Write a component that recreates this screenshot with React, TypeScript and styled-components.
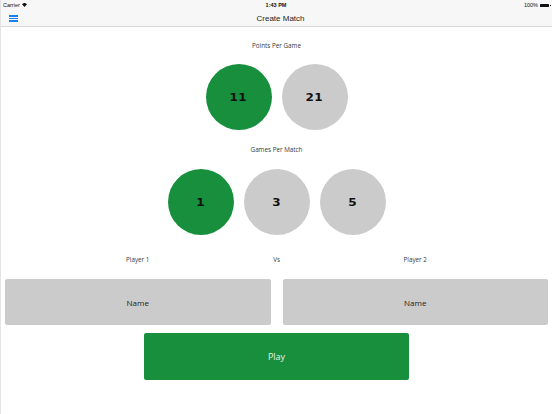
import { useState } from 'react';
import styled, { createGlobalStyle } from 'styled-components';

const GREEN = '#178f3d';
const GREY = '#cbcbcb';

const GlobalStyle = createGlobalStyle`
  html, body {
    margin: 0;
    padding: 0;
    background: #ffffff;
  }
  body {
    font-family: 'Open Sans', 'Liberation Sans', sans-serif;
  }
`;

const Page = styled.div`
  width: 552px;
  height: 414px;
  display: flex;
  flex-direction: column;
  border-left: 1px solid #e4e4e4;
  box-sizing: border-box;
  overflow: hidden;
`;

const Header = styled.header`
  background: #f7f7f7;
  border-bottom: 1px solid #d9d9d9;
  height: 27px;
  box-sizing: border-box;
  display: flex;
  flex-direction: column;
`;

const StatusBar = styled.div`
  height: 10px;
  padding: 0 3px 0 2px;
  display: grid;
  grid-template-columns: 1fr auto 1fr;
  align-items: center;
  font-family: 'Liberation Sans', Arial, sans-serif;
  font-size: 5.5px;
  color: #111;
`;

const Carrier = styled.span`
  display: flex;
  align-items: center;
  gap: 2px;
`;

const Clock = styled.span`
  font-weight: 700;
`;

const Battery = styled.span`
  justify-self: end;
  display: flex;
  align-items: center;
  gap: 2px;
`;

const BatteryCell = styled.span`
  width: 9px;
  height: 3px;
  background: #111;
  border-radius: 0.5px;
  position: relative;

  &::after {
    content: '';
    position: absolute;
    right: -1.5px;
    top: 1px;
    width: 1px;
    height: 1.5px;
    background: #111;
  }
`;

const NavBar = styled.div`
  flex: 1;
  display: grid;
  grid-template-columns: 40px 1fr 40px;
  align-items: center;
  padding-left: 8px;
`;

const MenuButton = styled.div`
  width: 9px;
  height: 7px;
  margin-top: 1px;
  display: flex;
  flex-direction: column;
  justify-content: space-between;

  span {
    display: block;
    height: 1.6px;
    background: #1a7ff0;
  }
`;

const Title = styled.h1`
  margin: 0 -40px;
  text-align: center;
  font-family: 'Liberation Sans', Arial, sans-serif;
  font-weight: 400;
  font-size: 8px;
  color: #1e1e1e;
`;

const Content = styled.main`
  flex: 1;
  display: flex;
  flex-direction: column;
  align-items: center;
  padding-top: 15px;
`;

const SectionLabel = styled.div`
  font-size: 6.3px;
  line-height: 8px;
  color: #3a3a3a;
`;

const ChoiceRow = styled.div<{ $top: number }>`
  display: flex;
  gap: 10px;
  margin-top: ${(p) => p.$top}px;
  margin-bottom: 16px;
`;

const Choice = styled.button<{ $active: boolean }>`
  width: 66px;
  height: 66px;
  border-radius: 50%;
  border: none;
  padding: 0;
  background: ${(p) => (p.$active ? GREEN : GREY)};
  display: flex;
  align-items: center;
  justify-content: center;
  cursor: pointer;
`;

// wide, squared digits on the choice buttons
const Digits = styled.span`
  display: inline-block;
  font-family: 'DejaVu Sans', sans-serif;
  font-weight: 700;
  font-size: 10px;
  letter-spacing: 0.2px;
  color: #111;
  transform: scaleX(1.2);
`;

const Players = styled.div`
  align-self: stretch;
  display: grid;
  grid-template-columns: 1fr 0 1fr;
  column-gap: 6px;
  padding: 0 4px;
  margin-top: 5px;
`;

const PlayerLabel = styled.div`
  font-size: 6.3px;
  line-height: 8px;
  color: #3a3a3a;
  display: flex;
  justify-content: center;
  white-space: nowrap;
`;

const NameRow = styled.div`
  align-self: stretch;
  display: grid;
  grid-template-columns: 1fr 1fr;
  gap: 12px;
  padding: 0 4px;
  margin-top: 15px;
`;

const NameField = styled.div`
  height: 46px;
  background: ${GREY};
  border-radius: 2px;
  display: flex;
  align-items: center;
  justify-content: center;
  font-size: 8px;
  color: #222;
`;

const PlayButton = styled.button`
  margin-top: 8px;
  width: 265px;
  height: 47px;
  border: none;
  border-radius: 2px;
  background: ${GREEN};
  color: #e8f2ea;
  font-family: 'Open Sans', 'Liberation Sans', sans-serif;
  font-size: 9px;
  cursor: pointer;
`;

const WifiIcon = () => (
  <svg width="5" height="4" viewBox="0 0 10 8">
    <path d="M5 8 L0 2.5 A7 7 0 0 1 10 2.5 Z" fill="#111" />
  </svg>
);

const App = () => {
  const [points, setPoints] = useState(11);
  const [games, setGames] = useState(1);

  return (
    <Page>
      <GlobalStyle />
      <Header>
        <StatusBar>
          <Carrier>
            Carrier <WifiIcon />
          </Carrier>
          <Clock>1:43 PM</Clock>
          <Battery>
            100% <BatteryCell />
          </Battery>
        </StatusBar>
        <NavBar>
          <MenuButton>
            <span />
            <span />
            <span />
          </MenuButton>
          <Title>Create Match</Title>
        </NavBar>
      </Header>

      <Content>
        <SectionLabel>Points Per Game</SectionLabel>
        <ChoiceRow $top={14}>
          {[11, 21].map((n) => (
            <Choice key={n} $active={points === n} onClick={() => setPoints(n)}>
              <Digits>{n}</Digits>
            </Choice>
          ))}
        </ChoiceRow>

        <SectionLabel>Games Per Match</SectionLabel>
        <ChoiceRow $top={15}>
          {[1, 3, 5].map((n) => (
            <Choice key={n} $active={games === n} onClick={() => setGames(n)}>
              <Digits>{n}</Digits>
            </Choice>
          ))}
        </ChoiceRow>

        <Players>
          <PlayerLabel>Player 1</PlayerLabel>
          <PlayerLabel>Vs</PlayerLabel>
          <PlayerLabel>Player 2</PlayerLabel>
        </Players>

        <NameRow>
          <NameField>Name</NameField>
          <NameField>Name</NameField>
        </NameRow>

        <PlayButton>Play</PlayButton>
      </Content>
    </Page>
  );
};

export default App;
